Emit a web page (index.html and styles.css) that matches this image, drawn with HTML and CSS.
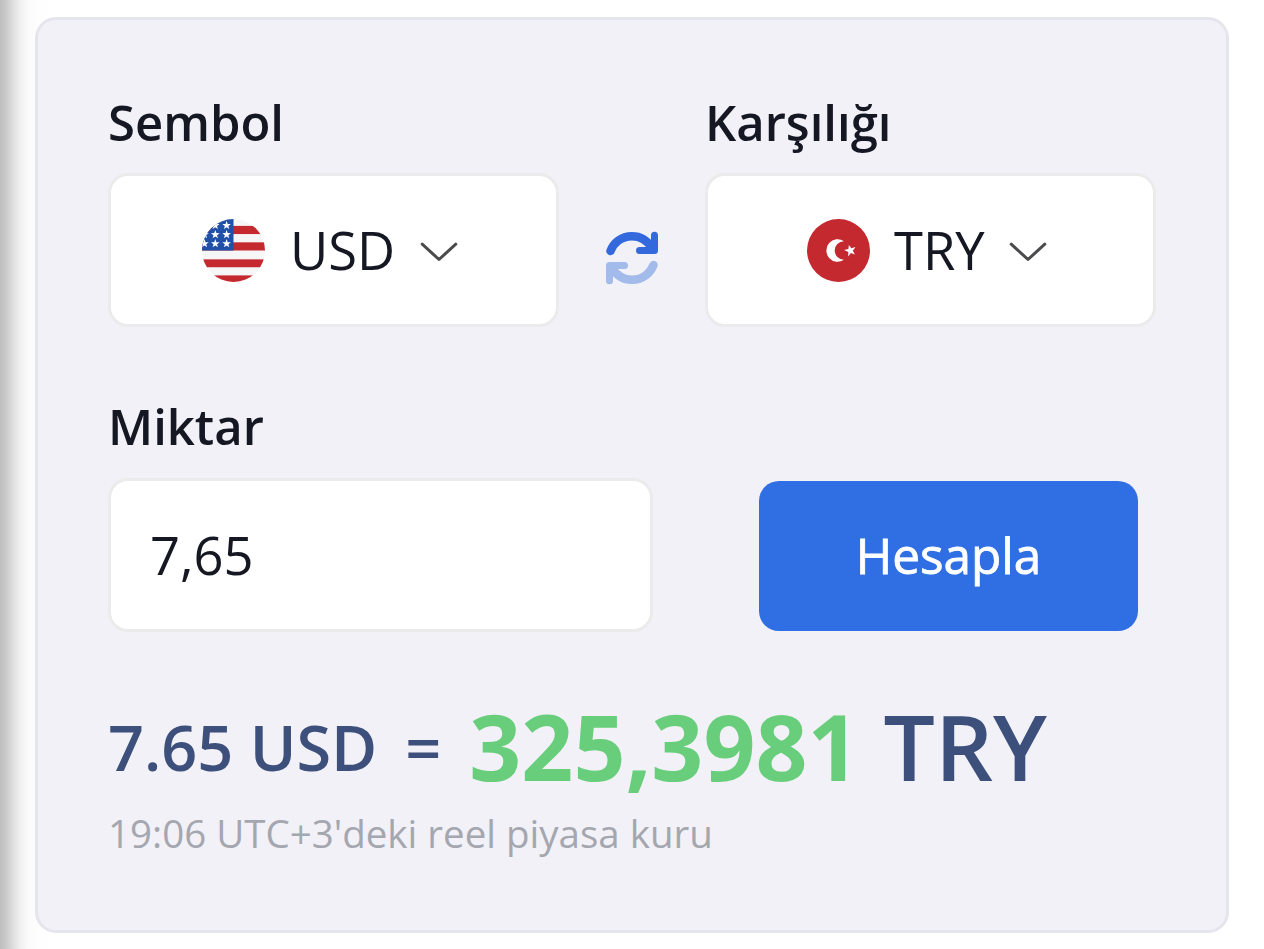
FILE: index.html
```html
<!DOCTYPE html>
<html lang="tr">
<head>
    <meta charset="UTF-8">
    <meta name="viewport" content="width=device-width, initial-scale=1.0">
    <title>Döviz Çevirici</title>
    <link rel="stylesheet" href="styles.css">
</head>
<body>
    <div class="converter">
        <div class="row">
            <div class="field">
                <div class="label">Sembol</div>
                <button class="select" type="button">
                    <svg class="flag" viewBox="0 0 64 64">
                        <defs>
                            <clipPath id="round"><circle cx="32" cy="32" r="32"/></clipPath>
                            <path id="star" d="M0-4.6 1.1-1.5 4.4-1.4 1.8.6 2.7 3.7 0 1.9-2.7 3.7-1.8.6-4.4-1.4-1.1-1.5z"/>
                        </defs>
                        <g clip-path="url(#round)">
                            <rect width="64" height="64" fill="#f6f6f7"/>
                            <g fill="#c4292f">
                                <rect y="7" width="64" height="8.3"/>
                                <rect y="23.7" width="64" height="8.3"/>
                                <rect y="41" width="64" height="8"/>
                                <rect y="57.3" width="64" height="7"/>
                            </g>
                            <rect width="32" height="32" fill="#2150a8"/>
                            <g fill="#fff">
                                <use href="#star" x="13.5" y="6.5"/>
                                <use href="#star" x="25" y="6.5"/>
                                <use href="#star" x="2.5" y="15.8"/>
                                <use href="#star" x="13.5" y="15.8"/>
                                <use href="#star" x="25" y="15.8"/>
                                <use href="#star" x="2.5" y="25"/>
                                <use href="#star" x="13.5" y="25"/>
                                <use href="#star" x="25" y="25"/>
                            </g>
                        </g>
                    </svg>
                    <span class="code">USD</span>
                    <svg class="chevron" viewBox="0 0 38 20"><path d="M2.2 2.2 19 17.5 35.8 2.2"/></svg>
                </button>
            </div>

            <svg class="swap" viewBox="0 0 54 54">
                <g fill="none" stroke-linecap="round" stroke-linejoin="round">
                    <g stroke="#3369dc">
                        <path stroke-width="8.5" d="M5.5 20C8.5 12 16 5.2 27 5.2 37 5.200 43 10.500 47 17"/>
                        <path stroke-width="7" d="M49.500 4.200V19.500H34.500"/>
                    </g>
                    <g stroke="#a2bbeb">
                        <path stroke-width="8.5" d="M48.500 34C45.500 42 38 48.800 27 48.800 17 48.800 11 43.500 7 37"/>
                        <path stroke-width="7" d="M4.500 49.800V34.500H19.500"/>
                    </g>
                </g>
            </svg>

            <div class="field">
                <div class="label">Karşılığı</div>
                <button class="select select-try" type="button">
                    <svg class="flag" viewBox="0 0 64 64">
                        <circle cx="32" cy="32" r="32" fill="#c4292f"/>
                        <path fill="#fff" d="M37.5 22.6A11.4 11.4 0 1 0 37.5 41.4A9.4 9.4 0 1 1 37.5 22.6z"/>
                        <path fill="#fff" d="M37.7 31.6 42 30.5 42.6 26.3 45 29.8 49.3 28.5 46.5 32.2 48.7 36 44.6 34.5 41.8 38 42 33.5z"/>
                    </svg>
                    <span class="code">TRY</span>
                    <svg class="chevron" viewBox="0 0 38 20"><path d="M2.2 2.2 19 17.5 35.8 2.2"/></svg>
                </button>
            </div>
        </div>

        <div class="row row-amount">
            <div class="field field-amount">
                <label class="label" for="amount">Miktar</label>
                <input class="amount" id="amount" type="text" value="7,65">
            </div>
            <button class="calculate" type="button">Hesapla</button>
        </div>

        <div class="result">
            <span class="from">7.65 USD</span>
            <span class="equals">=</span>
            <span class="value">325,3981</span>
            <span class="to">TRY</span>
        </div>
        <div class="note">19:06 UTC+3'deki reel piyasa kuru</div>
    </div>
</body>
</html>
```
FILE: styles.css
```css
* {
    box-sizing: border-box;
}
body {
    margin: 0;
    height: 949px;
    padding: 17px 35px 0;
    overflow: hidden;
    font-family: "Open Sans", "Noto Sans", sans-serif;
    color: #151823;
    background: linear-gradient(90deg, #bdbdbd 0, #cacaca 6px, #dedede 13px, #f0f0f0 20px, #fafafa 28px, #fefefe 38px, #fff 50px);
}
.converter {
    width: 1194px;
    height: 916px;
    padding: 74px 70px 0;
    border: 3px solid #e5e5ed;
    border-radius: 21px;
    background: #f2f1f7;
}
.row {
    display: flex;
    align-items: flex-end;
}
.field {
    width: 451px;
}
.label {
    display: block;
    height: 79px;
    line-height: 56px;
    font-size: 49px;
    font-weight: 600;
}
button,
input {
    font-family: inherit;
    color: inherit;
}
.select {
    display: flex;
    align-items: center;
    width: 100%;
    height: 154px;
    padding: 0 0 0 91px;
    border: 3px solid #ebebeb;
    border-radius: 20px;
    background: #fff;
}
.select-try {
    padding-left: 99px;
}
.flag {
    flex: none;
    width: 63px;
    height: 63px;
}
.code {
    margin-left: 25px;
    font-size: 52.5px;
    line-height: 72px;
}
.select-try .code {
    margin-left: 24px;
}
.chevron {
    width: 38px;
    height: 20px;
    margin: 3px 0 0 25px;
    fill: none;
    stroke: #4b4b4d;
    stroke-width: 3;
    stroke-linecap: round;
    stroke-linejoin: round;
}
.select-try .chevron {
    margin-left: 24px;
}
.swap {
    width: 54px;
    height: 54px;
    margin: 0 46px 42px;
}
.row-amount {
    margin-top: 72px;
}
.field-amount {
    width: 545px;
}
.field-amount .label {
    line-height: 55px;
}
.amount {
    display: block;
    width: 100%;
    height: 154px;
    padding: 0 39px 2px;
    border: 3px solid #ebebeb;
    border-radius: 20px;
    font-size: 52.5px;
    background: #fff;
}
.calculate {
    width: 379px;
    height: 150px;
    margin: 0 0 1px 106px;
    padding-bottom: 3px;
    border: 0;
    border-radius: 20px;
    font-size: 49.5px;
    font-weight: 500;
    color: #fff;
    -webkit-text-stroke: 0.8px #fff;
    background: #306fe3;
}
.result {
    display: flex;
    align-items: center;
    height: 126px;
    margin-top: 51px;
    font-weight: 600;
    color: #3d507b;
    white-space: nowrap;
}
.from,
.equals {
    font-size: 63px;
}
.equals {
    margin-left: 28px;
}
.value {
    margin-left: 28px;
    font-size: 91px;
    font-weight: 700;
    color: #69ce7b;
}
.to {
    margin-left: 24px;
    font-size: 91px;
}
.note {
    line-height: 54px;
    margin-top: -3px;
    font-size: 38.5px;
    color: #a4a7af;
}
```
